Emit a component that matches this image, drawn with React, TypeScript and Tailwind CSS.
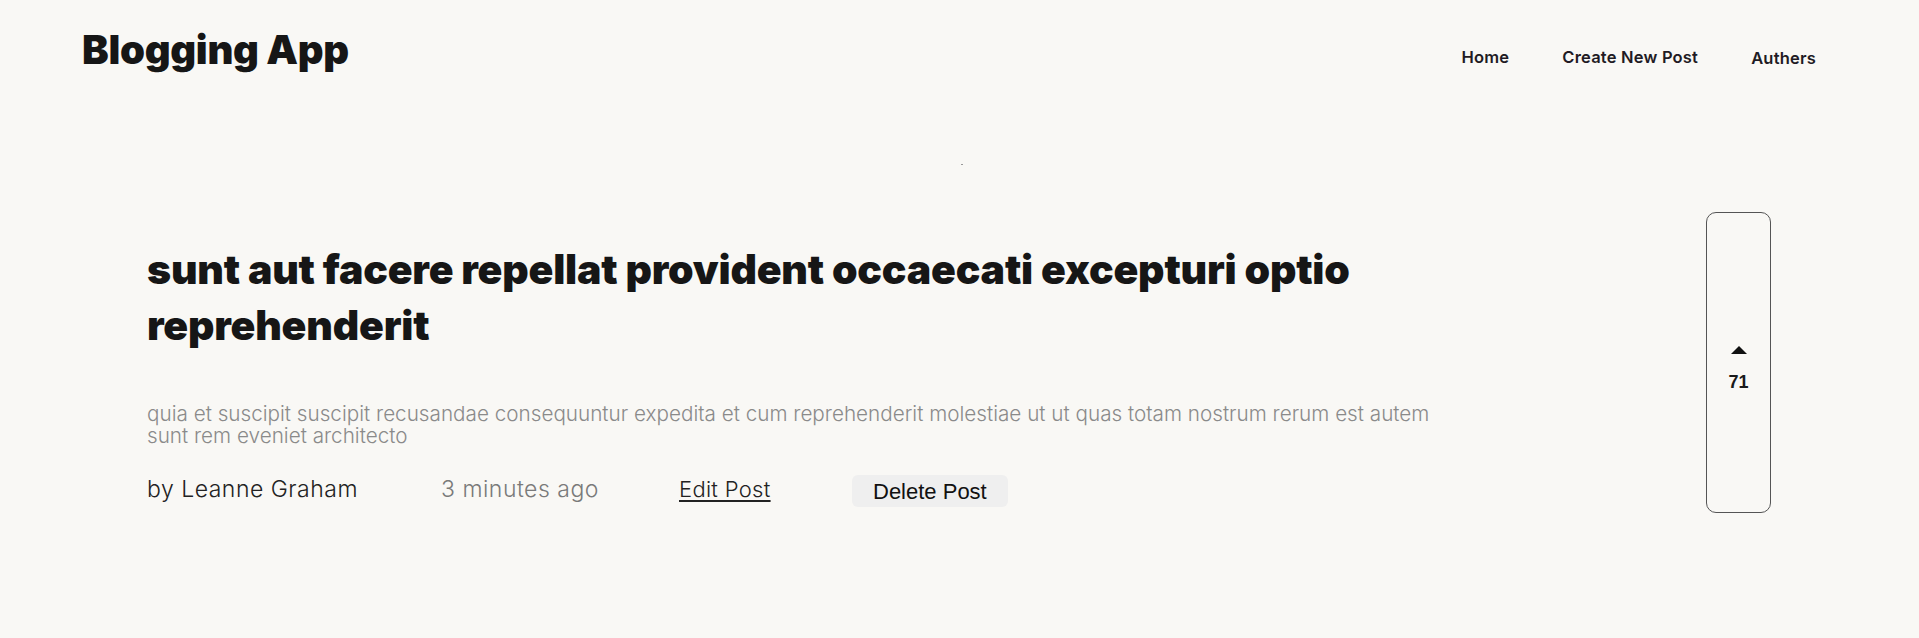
import type React from "react";

const post = {
  title: "sunt aut facere repellat provident occaecati excepturi optio reprehenderit",
  body: "quia et suscipit suscipit recusandae consequuntur expedita et cum reprehenderit molestiae ut ut quas totam nostrum rerum est autem sunt rem eveniet architecto",
  author: "Leanne Graham",
  time: "3 minutes ago",
  votes: 71,
};

const Header: React.FC = () => (
  <header className="flex items-center justify-between pl-[82px] pr-[103px] h-[100px]">
    <h1 className="font-['Inter',sans-serif] font-black text-[40px] tracking-[-0.3px] text-[#161616]">
      Blogging App
    </h1>
    <nav className="flex items-center gap-[53px] font-['Inter',sans-serif] font-semibold text-[16.5px] tracking-[0.2px] text-[#1f1b24] mt-[14px]">
      <a href="#">Home</a>
      <a href="#">Create New Post</a>
      <a href="#" className="mt-[3px]">Authers</a>
    </nav>
  </header>
);

const VoteBox: React.FC<{ votes: number }> = ({ votes }) => (
  <div className="w-[65px] h-[301px] border border-[#555] rounded-[10px] flex flex-col items-center pt-[133px] gap-[19px] mr-[148px] mt-[47px] shrink-0">
    <button className="w-0 h-0 border-l-[8px] border-r-[8px] border-b-[8px] border-l-transparent border-r-transparent border-b-[#111]" />
    <span className="font-['Liberation_Sans',Arial,sans-serif] font-bold text-[18px] leading-none text-[#1a1a1a]">
      {votes}
    </span>
  </div>
);

export default function App() {
  return (
    <div className="min-h-screen bg-[#f9f8f5]">
      <Header />
      <div className="flex justify-center">
        <span className="block w-[2px] h-[1px] bg-[#999] mt-[64px] ml-[4px]" />
      </div>
      <main className="flex items-start justify-between">
        <article className="pl-[147px] w-[1465px] pt-[76px]">
          <h2 className="font-['Inter',sans-serif] font-black text-[41px] leading-[56px] tracking-[-0.2px] text-[#161616]">
            {post.title}
          </h2>
          <p className="mt-[50px] font-['Inter',sans-serif] font-light text-[20.7px] leading-[22px] text-[#8a8a8a]">
            {post.body}
          </p>
          <div className="flex items-center h-[32px] mt-[28px] font-['Inter',sans-serif] font-light">
            <span className="text-[#222] w-[294px] shrink-0 text-[23px] tracking-[0.5px] mb-[4px]">
              by {post.author}
            </span>
            <span className="text-[#7a7a7a] w-[238px] shrink-0 text-[23px] tracking-[0.5px] mb-[4px]">
              {post.time}
            </span>
            <span className="w-[173px] shrink-0 text-[22px] tracking-[0.3px] mb-[4px]">
              <a href="#" className="text-[#222] underline underline-offset-[3px]">
                Edit Post
              </a>
            </span>
            <button className="h-[32px] px-[21px] rounded-[6px] bg-[#efefef] font-['Liberation_Sans',Arial,sans-serif] text-[22px] text-[#111]">
              Delete Post
            </button>
          </div>
        </article>
        <VoteBox votes={post.votes} />
      </main>
    </div>
  );
}
